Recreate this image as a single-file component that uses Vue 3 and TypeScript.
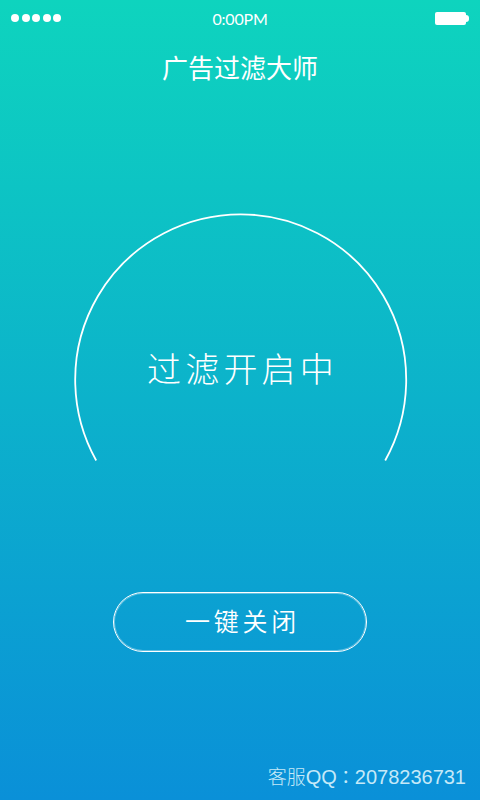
<script setup lang="ts">
const dots: number[] = [1, 2, 3, 4, 5]
</script>

<template>
  <div class="page">
    <div class="status">
      <div class="dots"><i v-for="d in dots" :key="d" class="dot"></i></div>
      <span class="time">0:00PM</span>
      <div class="battery"><i class="cell"></i><i class="tip"></i></div>
    </div>
    <h1 class="title">广告过滤大师</h1>
    <div class="dial">
      <svg class="arc" width="340" height="256" viewBox="0 0 340 256" fill="none">
        <path d="M26.2 251.5 A165.5 165.5 0 1 1 315.2 251.5" stroke="#fff" stroke-width="1.8" />
      </svg>
      <span class="dial-text">过滤开启中</span>
    </div>
    <button class="close-btn">一键关闭</button>
    <div class="footer"><span class="cjk">客服</span>QQ<span class="colon">：</span>2078236731</div>
  </div>
</template>

<style>
html, body { margin: 0; padding: 0; }
</style>

<style scoped>
.page {
  width: 480px;
  height: 800px;
  overflow: hidden;
  display: flex;
  flex-direction: column;
  color: #fff;
  background: linear-gradient(180deg, #0ed4be 0%, #0a90d8 100%);
  font-family: "Noto Sans CJK SC", "Noto Sans", sans-serif;
}
.status {
  height: 36px;
  display: grid;
  grid-template-columns: 1fr auto 1fr;
  align-items: center;
  padding: 0 11px;
}
.dots { display: flex; gap: 2.6px; }
.dot { width: 8px; height: 8px; border-radius: 50%; background: #fff; }
.time {
  font-family: Lato, sans-serif;
  font-size: 16px;
  font-weight: 400;
  letter-spacing: -0.2px;
}
.battery { justify-self: end; display: flex; align-items: center; }
.cell { width: 31px; height: 13px; border-radius: 2px; background: #fff; }
.tip { width: 3px; height: 7px; border-radius: 0 3px 3px 0; background: #fff; }
.title {
  margin: 12px 0 0;
  text-align: center;
  font-size: 26px;
  line-height: 38px;
  font-weight: 400;
}
.dial {
  position: relative;
  margin: 124px 0 0 70px;
  width: 340px;
  height: 256px;
}
.arc { position: absolute; left: 0; top: -1px; }
.dial-text {
  position: absolute;
  left: 5px;
  right: 0;
  top: 133px;
  text-align: center;
  font-size: 34px;
  line-height: 50px;
  font-weight: 300;
  letter-spacing: 4.2px;
}
.close-btn {
  margin: 126px 0 0 113px;
  width: 254px;
  height: 60px;
  box-sizing: border-box;
  border: 1px solid #fff;
  box-shadow: inset 0 0 0 1px rgba(255, 255, 255, 0.35);
  border-radius: 30px;
  background: transparent;
  color: #fff;
  font-family: inherit;
  font-size: 25px;
  font-weight: 350;
  letter-spacing: 3.8px;
  padding: 0 0 4px 5px;
}
.footer {
  margin-top: auto;
  padding: 0 14px 10px 0;
  text-align: right;
  font-family: "Liberation Sans", "Noto Sans CJK SC", sans-serif;
  font-size: 20px;
  line-height: 26px;
  color: #c5e9f8;
}
.cjk { font-size: 19px; font-weight: 300; font-family: "Noto Sans CJK SC", sans-serif; }
.colon { font-size: 18px; font-family: "Noto Sans CJK TC", sans-serif; }
</style>
